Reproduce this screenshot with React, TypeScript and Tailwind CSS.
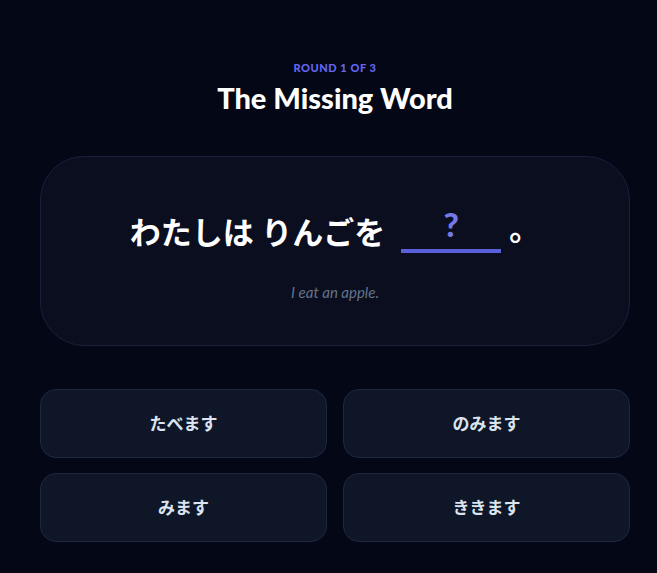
import React from 'react';

const choices = ['たべます', 'のみます', 'みます', 'ききます'];

const App: React.FC = () => {
  return (
    <div
      className="min-h-[573px] bg-[#040715] pl-10 pt-[60px] pb-8"
      style={{ fontFamily: 'Lato, "Noto Sans CJK JP", sans-serif' }}
    >
      <div className="w-[590px]">
        {/* Header */}
        <div className="text-center">
          <p className="text-[11px] font-black uppercase tracking-wider text-[#6366f1] leading-[16px]">
            Round 1 of 3
          </p>
          <h1 className="mt-[4px] text-[29px] font-black leading-[36px] text-white">The Missing Word</h1>
        </div>

        {/* Sentence card */}
        <div className="mt-[40px] h-[190px] rounded-[44px] border border-[#1c1f3d] bg-[#0a0e1f] flex flex-col items-center pt-[46px]">
          <div className="flex items-end text-[31px] font-bold text-white leading-[42px]">
            <span>わたしは りんごを</span>
            <span className="ml-4 mr-2 w-[100px] h-[50px] border-b-4 border-[#5b5fd9] flex items-start justify-center text-[33px] font-black text-[#7479e6] leading-[43px]">
              ?
            </span>
            <span className="relative top-[-4px]">。</span>
          </div>
          <p className="mt-[28px] text-[15px] italic text-[#64748b]">I eat an apple.</p>
        </div>

        {/* Choices */}
        <div className="mt-[43px] grid grid-cols-2 gap-x-4 gap-y-[15px]">
          {choices.map(choice => (
            <button
              key={choice}
              className="h-[69px] rounded-2xl border border-[#1f2840] bg-[#0e1628] text-[17px] font-bold text-[#dbe3ee]"
            >
              {choice}
            </button>
          ))}
        </div>
      </div>
    </div>
  );
};

export default App;
